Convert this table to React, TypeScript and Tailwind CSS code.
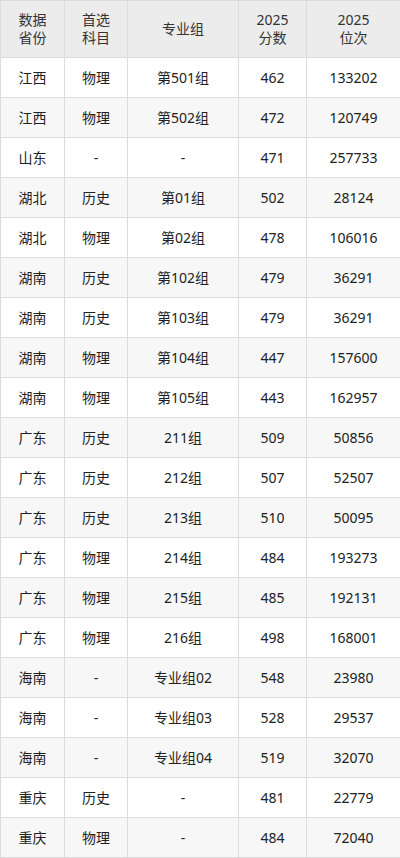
const rows: string[][] = [
  ["江西", "物理", "第501组", "462", "133202"],
  ["江西", "物理", "第502组", "472", "120749"],
  ["山东", "-", "-", "471", "257733"],
  ["湖北", "历史", "第01组", "502", "28124"],
  ["湖北", "物理", "第02组", "478", "106016"],
  ["湖南", "历史", "第102组", "479", "36291"],
  ["湖南", "历史", "第103组", "479", "36291"],
  ["湖南", "物理", "第104组", "447", "157600"],
  ["湖南", "物理", "第105组", "443", "162957"],
  ["广东", "历史", "211组", "509", "50856"],
  ["广东", "历史", "212组", "507", "52507"],
  ["广东", "历史", "213组", "510", "50095"],
  ["广东", "物理", "214组", "484", "193273"],
  ["广东", "物理", "215组", "485", "192131"],
  ["广东", "物理", "216组", "498", "168001"],
  ["海南", "-", "专业组02", "548", "23980"],
  ["海南", "-", "专业组03", "528", "29537"],
  ["海南", "-", "专业组04", "519", "32070"],
  ["重庆", "历史", "-", "481", "22779"],
  ["重庆", "物理", "-", "484", "72040"],
];

const cell = "border border-[#dcdcdc] text-center p-0";

export default function App() {
  return (
    <div
      className="w-[400px] bg-white text-[#222] text-[14px]"
      style={{ fontFamily: '"Noto Sans", "Noto Sans CJK SC", sans-serif' }}
    >
      <table className="w-[400px] table-fixed border-collapse">
        <colgroup>
          <col className="w-[64px]" />
          <col className="w-[63px]" />
          <col className="w-[111px]" />
          <col className="w-[68px]" />
          <col className="w-[94px]" />
        </colgroup>
        <thead>
          <tr className="h-[57px] bg-[#ececec] text-[#333] leading-[18px]">
            <th className={cell + " font-normal"}>
              数据
              <br />
              省份
            </th>
            <th className={cell + " font-normal"}>
              首选
              <br />
              科目
            </th>
            <th className={cell + " font-normal"}>专业组</th>
            <th className={cell + " font-normal"}>
              2025
              <br />
              分数
            </th>
            <th className={cell + " font-normal"}>
              2025
              <br />
              位次
            </th>
          </tr>
        </thead>
        <tbody>
          {rows.map((r, i) => (
            <tr
              key={i}
              className={"h-[40px] " + (i % 2 === 1 ? "bg-[#f7f7f7]" : "bg-white")}
            >
              {r.map((v, j) => (
                <td key={j} className={cell}>
                  {v}
                </td>
              ))}
            </tr>
          ))}
        </tbody>
      </table>
    </div>
  );
}
